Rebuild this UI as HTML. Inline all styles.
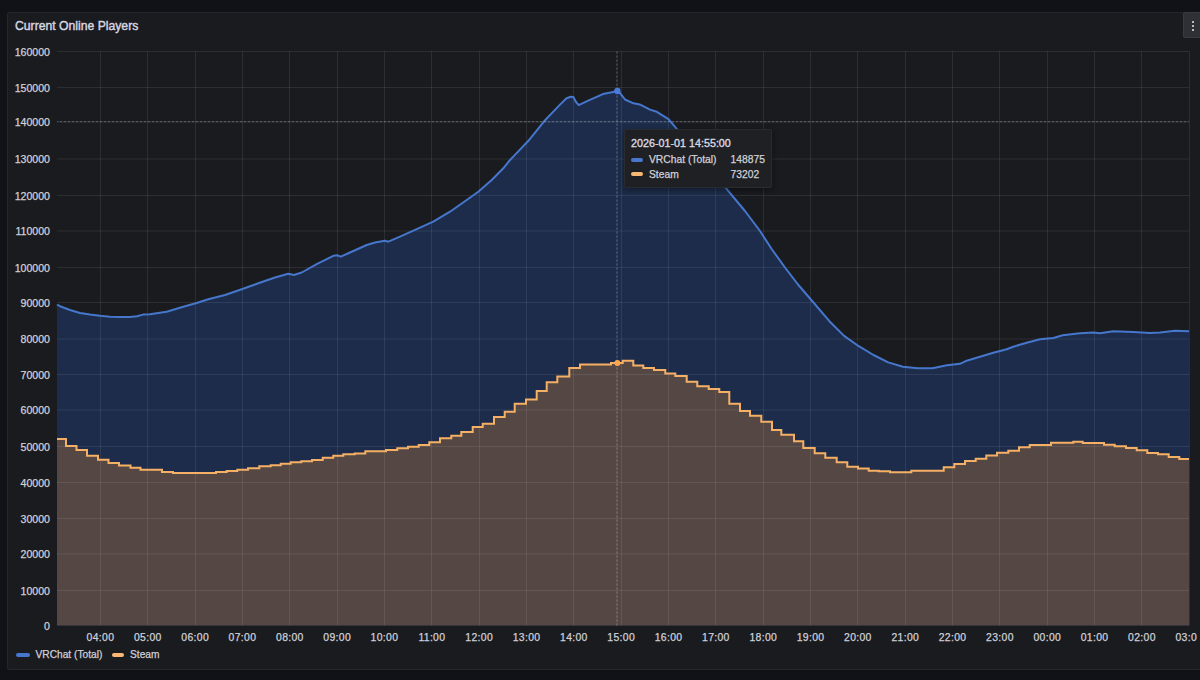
<!DOCTYPE html>
<html><head><meta charset="utf-8">
<style>
html,body{margin:0;padding:0;}
body{width:1200px;height:680px;overflow:hidden;background:#111217;position:relative;font-family:"Liberation Sans",sans-serif;}
.panel{position:absolute;left:7px;top:11.5px;width:1210px;height:658px;background:#1a1b1f;border:1px solid #25262b;border-radius:2px;box-sizing:border-box;}
.title{position:absolute;left:15px;top:18.6px;font-size:12.2px;font-weight:normal;color:#d6d7e0;-webkit-text-stroke:0.4px #d6d7e0;white-space:nowrap;}
.menu{position:absolute;left:1183px;top:12px;width:30px;height:26px;background:#2f3035;border:1px solid #3a3b40;border-radius:2px;box-sizing:border-box;}
.dot{position:absolute;left:8.3px;width:1.8px;height:1.8px;background:#b8b9c0;}
svg{position:absolute;left:0;top:0;}
.yl{position:absolute;right:1150px;margin-top:0px;font-size:10.6px;color:#cfd0d9;-webkit-text-stroke:0.25px #cfd0d9;line-height:12px;white-space:nowrap;}
.xl{position:absolute;top:631.8px;width:40px;text-align:center;font-size:10.4px;letter-spacing:0.35px;color:#cfd0d9;-webkit-text-stroke:0.25px #cfd0d9;line-height:12px;white-space:nowrap;}
.tt{position:absolute;left:624px;top:129px;width:148px;height:59px;background:#1f2024;border:1px solid #2a2b30;box-sizing:border-box;border-radius:2px;box-shadow:0 2px 6px rgba(0,0,0,0.4);}
.tt .h{position:absolute;left:6px;top:7px;font-size:10.75px;font-weight:normal;color:#d8d9e0;-webkit-text-stroke:0.35px #d8d9e0;white-space:nowrap;}
.tt .r{position:absolute;left:24px;font-size:10.3px;color:#d0d1d8;-webkit-text-stroke:0.25px #d0d1d8;white-space:nowrap;}
.tt .v{position:absolute;left:105.5px;font-size:10.3px;color:#d0d1d8;-webkit-text-stroke:0.25px #d0d1d8;white-space:nowrap;}
.sw{position:absolute;width:12px;height:4px;border-radius:2px;}
.lg{position:absolute;top:648.5px;font-size:10.2px;color:#cfd0d9;-webkit-text-stroke:0.25px #cfd0d9;white-space:nowrap;line-height:12px;}
</style></head><body>
<div class="panel"></div>
<div class="title">Current Online Players</div>
<div class="menu"><div class="dot" style="top:8px"></div><div class="dot" style="top:12px"></div><div class="dot" style="top:16px"></div></div>
<svg width="1200" height="680" viewBox="0 0 1200 680">
<path d="M57 304.6 L60 306.2 L70 310 L80 313 L90 314.6 L100 315.8 L110 316.7 L120 317 L130 317 L137 316.2 L143 314.6 L150 314.2 L166.7 311.7 L183.3 306.7 L195.8 303.3 L208.3 299.2 L225 295 L241.7 289.2 L258.3 283.3 L275 277.5 L288.3 273.7 L294 275 L301.7 272.5 L316.7 264.2 L333.3 255.8 L337.5 255.3 L340.8 256.7 L350 252.5 L366.7 245 L375 242.5 L385 240.8 L388.3 241.7 L400 236.7 L416.7 229.2 L433.3 221.7 L450 211.7 L466.7 200 L478.3 191.7 L491.7 180 L503.3 168.3 L510 160 L514.7 155.1 L529.4 139.7 L544.1 121.3 L558.8 105.9 L566.2 98.5 L570.6 96.8 L573.5 97.1 L575.7 101.5 L578.7 105.1 L588.2 100.7 L602.9 94.1 L613.2 92.1 L617.4 90 L622 95.6 L625 99.5 L632.4 102.9 L639.7 104.4 L650 109.6 L656.8 111.8 L668.5 119.1 L675.9 127.9 L700 157 L725.9 188.2 L745 211 L760 231 L772 249.5 L785 267.5 L798 284.5 L810 298.5 L829.4 321.2 L844.1 335.9 L858.8 346.2 L873.5 355 L888.2 362.4 L902.9 366.8 L917.6 368.2 L932.4 368.2 L947 365.3 L960 363.8 L966.7 360.7 L980 356.7 L993.3 352.7 L1006.7 349.3 L1013.3 346.7 L1026.7 342.7 L1040 339.3 L1053.3 338 L1062.7 335.3 L1080 333.3 L1093.3 332.4 L1100 333.3 L1113.3 331.3 L1133.3 332 L1150 333 L1160 332.5 L1175 330.8 L1189 331.3 L1189 625.6 L57 625.6 Z" fill="#1c2c4a"/>
<path d="M57 439 L66 439 L66 446 L76.5 446 L76.5 450 L87 450 L87 455.8 L98 455.8 L98 459.8 L108.5 459.8 L108.5 463 L119 463 L119 465.5 L130.5 465.5 L130.5 467.8 L140.5 467.8 L140.5 469.8 L162 469.8 L162 472 L173 472 L173 473 L216 473 L216 472 L226.7 472 L226.7 471 L237.3 471 L237.3 469.7 L248 469.7 L248 468.3 L259.3 468.3 L259.3 466.3 L270.7 466.3 L270.7 465.3 L280.7 465.3 L280.7 463.7 L290.7 463.7 L290.7 462.3 L301.3 462.3 L301.3 461.3 L312 461.3 L312 460 L322.7 460 L322.7 457.7 L333.3 457.7 L333.3 455.7 L343.3 455.7 L343.3 454.3 L354.7 454.3 L354.7 453.4 L365.3 453.4 L365.3 451.3 L386 451.3 L386 450 L397.3 450 L397.3 448.3 L408 448.3 L408 446.7 L418.7 446.7 L418.7 445 L429.3 445 L429.3 442.3 L440 442.3 L440 438.3 L451.3 438.3 L451.3 435.7 L461.3 435.7 L461.3 432 L472.7 432 L472.7 427 L482.7 427 L482.7 423.7 L494 423.7 L494 417 L504.7 417 L504.7 411.7 L514.7 411.7 L514.7 403.7 L526 403.7 L526 399.4 L536.7 399.4 L536.7 391 L546.7 391 L546.7 382.3 L557.3 382.3 L557.3 376.6 L569.3 376.6 L569.3 367.9 L580 367.9 L580 364.5 L611 364.5 L611 363 L622.7 363 L622.7 360.7 L633.3 360.7 L633.3 365.5 L643.3 365.5 L643.3 367.9 L654 367.9 L654 370 L665.3 370 L665.3 373.4 L675.3 373.4 L675.3 375.9 L686.7 375.9 L686.7 381.7 L697.3 381.7 L697.3 386.3 L708.7 386.3 L708.7 389 L719.3 389 L719.3 392 L729.3 392 L729.3 403.7 L740 403.7 L740 411 L750 411 L750 415.7 L761.3 415.7 L761.3 421.7 L772 421.7 L772 430 L781.3 430 L781.3 434.7 L794 434.7 L794 441.3 L803.3 441.3 L803.3 448 L814.7 448 L814.7 453.3 L825.3 453.3 L825.3 457.7 L836.7 457.7 L836.7 462.3 L847.3 462.3 L847.3 466.7 L858 466.7 L858 468.4 L868.7 468.4 L868.7 470.7 L878.7 470.7 L878.7 471.3 L890 471.3 L890 472.3 L911.3 472.3 L911.3 470.7 L943.7 470.7 L943.7 467.3 L954.3 467.3 L954.3 464 L965 464 L965 461 L975.7 461 L975.7 458.7 L986.3 458.7 L986.3 455.6 L997 455.6 L997 452.7 L1008.3 452.7 L1008.3 450.7 L1019 450.7 L1019 447.3 L1029.7 447.3 L1029.7 445 L1051 445 L1051 442.7 L1073.3 442.7 L1073.3 441.7 L1082.7 441.7 L1082.7 443 L1104 443 L1104 444.7 L1114.7 444.7 L1114.7 446.3 L1126 446.3 L1126 448 L1136.7 448 L1136.7 450.3 L1147.3 450.3 L1147.3 453 L1158 453 L1158 454.3 L1168.7 454.3 L1168.7 457 L1179.3 457 L1179.3 459 L1189 459 L1189 625.6 L57 625.6 Z" fill="#554844"/>
<path d="M57 590.5 H1189 M57 554 H1189 M57 518.5 H1189 M57 482.5 H1189 M57 446.5 H1189 M57 410 H1189 M57 374.5 H1189 M57 339 H1189 M57 302.5 H1189 M57 267.5 H1189 M57 231 H1189 M57 195.5 H1189 M57 159 H1189 M57 122 H1189 M57 87.5 H1189 M57 51.5 H1189 M100.5 51.2 V625.6 M147.5 51.2 V625.6 M195.5 51.2 V625.6 M242.5 51.2 V625.6 M289.5 51.2 V625.6 M337.5 51.2 V625.6 M384.5 51.2 V625.6 M431.5 51.2 V625.6 M479.5 51.2 V625.6 M526.5 51.2 V625.6 M573.5 51.2 V625.6 M621.5 51.2 V625.6 M668.5 51.2 V625.6 M715.5 51.2 V625.6 M763.5 51.2 V625.6 M810.5 51.2 V625.6 M857.5 51.2 V625.6 M905.5 51.2 V625.6 M952.5 51.2 V625.6 M999.5 51.2 V625.6 M1047.5 51.2 V625.6 M1094.5 51.2 V625.6 M1141.5 51.2 V625.6 M1189.5 51.2 V625.6" stroke="rgba(230,240,255,0.09)" stroke-width="1" fill="none"/>
<path d="M57 304.6 L60 306.2 L70 310 L80 313 L90 314.6 L100 315.8 L110 316.7 L120 317 L130 317 L137 316.2 L143 314.6 L150 314.2 L166.7 311.7 L183.3 306.7 L195.8 303.3 L208.3 299.2 L225 295 L241.7 289.2 L258.3 283.3 L275 277.5 L288.3 273.7 L294 275 L301.7 272.5 L316.7 264.2 L333.3 255.8 L337.5 255.3 L340.8 256.7 L350 252.5 L366.7 245 L375 242.5 L385 240.8 L388.3 241.7 L400 236.7 L416.7 229.2 L433.3 221.7 L450 211.7 L466.7 200 L478.3 191.7 L491.7 180 L503.3 168.3 L510 160 L514.7 155.1 L529.4 139.7 L544.1 121.3 L558.8 105.9 L566.2 98.5 L570.6 96.8 L573.5 97.1 L575.7 101.5 L578.7 105.1 L588.2 100.7 L602.9 94.1 L613.2 92.1 L617.4 90 L622 95.6 L625 99.5 L632.4 102.9 L639.7 104.4 L650 109.6 L656.8 111.8 L668.5 119.1 L675.9 127.9 L700 157 L725.9 188.2 L745 211 L760 231 L772 249.5 L785 267.5 L798 284.5 L810 298.5 L829.4 321.2 L844.1 335.9 L858.8 346.2 L873.5 355 L888.2 362.4 L902.9 366.8 L917.6 368.2 L932.4 368.2 L947 365.3 L960 363.8 L966.7 360.7 L980 356.7 L993.3 352.7 L1006.7 349.3 L1013.3 346.7 L1026.7 342.7 L1040 339.3 L1053.3 338 L1062.7 335.3 L1080 333.3 L1093.3 332.4 L1100 333.3 L1113.3 331.3 L1133.3 332 L1150 333 L1160 332.5 L1175 330.8 L1189 331.3" stroke="#4677cc" stroke-width="2" fill="none" stroke-linejoin="round"/>
<path d="M57 439 L66 439 L66 446 L76.5 446 L76.5 450 L87 450 L87 455.8 L98 455.8 L98 459.8 L108.5 459.8 L108.5 463 L119 463 L119 465.5 L130.5 465.5 L130.5 467.8 L140.5 467.8 L140.5 469.8 L162 469.8 L162 472 L173 472 L173 473 L216 473 L216 472 L226.7 472 L226.7 471 L237.3 471 L237.3 469.7 L248 469.7 L248 468.3 L259.3 468.3 L259.3 466.3 L270.7 466.3 L270.7 465.3 L280.7 465.3 L280.7 463.7 L290.7 463.7 L290.7 462.3 L301.3 462.3 L301.3 461.3 L312 461.3 L312 460 L322.7 460 L322.7 457.7 L333.3 457.7 L333.3 455.7 L343.3 455.7 L343.3 454.3 L354.7 454.3 L354.7 453.4 L365.3 453.4 L365.3 451.3 L386 451.3 L386 450 L397.3 450 L397.3 448.3 L408 448.3 L408 446.7 L418.7 446.7 L418.7 445 L429.3 445 L429.3 442.3 L440 442.3 L440 438.3 L451.3 438.3 L451.3 435.7 L461.3 435.7 L461.3 432 L472.7 432 L472.7 427 L482.7 427 L482.7 423.7 L494 423.7 L494 417 L504.7 417 L504.7 411.7 L514.7 411.7 L514.7 403.7 L526 403.7 L526 399.4 L536.7 399.4 L536.7 391 L546.7 391 L546.7 382.3 L557.3 382.3 L557.3 376.6 L569.3 376.6 L569.3 367.9 L580 367.9 L580 364.5 L611 364.5 L611 363 L622.7 363 L622.7 360.7 L633.3 360.7 L633.3 365.5 L643.3 365.5 L643.3 367.9 L654 367.9 L654 370 L665.3 370 L665.3 373.4 L675.3 373.4 L675.3 375.9 L686.7 375.9 L686.7 381.7 L697.3 381.7 L697.3 386.3 L708.7 386.3 L708.7 389 L719.3 389 L719.3 392 L729.3 392 L729.3 403.7 L740 403.7 L740 411 L750 411 L750 415.7 L761.3 415.7 L761.3 421.7 L772 421.7 L772 430 L781.3 430 L781.3 434.7 L794 434.7 L794 441.3 L803.3 441.3 L803.3 448 L814.7 448 L814.7 453.3 L825.3 453.3 L825.3 457.7 L836.7 457.7 L836.7 462.3 L847.3 462.3 L847.3 466.7 L858 466.7 L858 468.4 L868.7 468.4 L868.7 470.7 L878.7 470.7 L878.7 471.3 L890 471.3 L890 472.3 L911.3 472.3 L911.3 470.7 L943.7 470.7 L943.7 467.3 L954.3 467.3 L954.3 464 L965 464 L965 461 L975.7 461 L975.7 458.7 L986.3 458.7 L986.3 455.6 L997 455.6 L997 452.7 L1008.3 452.7 L1008.3 450.7 L1019 450.7 L1019 447.3 L1029.7 447.3 L1029.7 445 L1051 445 L1051 442.7 L1073.3 442.7 L1073.3 441.7 L1082.7 441.7 L1082.7 443 L1104 443 L1104 444.7 L1114.7 444.7 L1114.7 446.3 L1126 446.3 L1126 448 L1136.7 448 L1136.7 450.3 L1147.3 450.3 L1147.3 453 L1158 453 L1158 454.3 L1168.7 454.3 L1168.7 457 L1179.3 457 L1179.3 459 L1189 459" stroke="#f6b065" stroke-width="2" fill="none"/>
<path d="M617 51.35 V625.6" stroke="rgba(200,205,225,0.38)" stroke-width="1" stroke-dasharray="2.5 1.5"/>
<path d="M57 121.7 H1189" stroke="rgba(200,205,225,0.38)" stroke-width="1" stroke-dasharray="2.5 1.5" stroke-dashoffset="1.25"/>
<circle cx="617.4" cy="91" r="3.2" fill="#4a7ad8"/>
<circle cx="617.4" cy="363" r="3" fill="#ffa64d"/>
</svg>
<div class="yl" style="top:619.6px">0</div><div class="yl" style="top:584.5px">10000</div><div class="yl" style="top:548px">20000</div><div class="yl" style="top:512.5px">30000</div><div class="yl" style="top:476.5px">40000</div><div class="yl" style="top:440.5px">50000</div><div class="yl" style="top:404px">60000</div><div class="yl" style="top:368.5px">70000</div><div class="yl" style="top:333px">80000</div><div class="yl" style="top:296.5px">90000</div><div class="yl" style="top:261.5px">100000</div><div class="yl" style="top:225px">110000</div><div class="yl" style="top:189.5px">120000</div><div class="yl" style="top:153px">130000</div><div class="yl" style="top:116px">140000</div><div class="yl" style="top:81.5px">150000</div><div class="yl" style="top:45.5px">160000</div>
<div style="position:absolute;left:0;top:0;width:1197px;height:680px;overflow:hidden"><div class="xl" style="left:80.5px">04:00</div><div class="xl" style="left:127.8px">05:00</div><div class="xl" style="left:175.2px">06:00</div><div class="xl" style="left:222.5px">07:00</div><div class="xl" style="left:269.9px">08:00</div><div class="xl" style="left:317.2px">09:00</div><div class="xl" style="left:364.5px">10:00</div><div class="xl" style="left:411.9px">11:00</div><div class="xl" style="left:459.2px">12:00</div><div class="xl" style="left:506.6px">13:00</div><div class="xl" style="left:553.9px">14:00</div><div class="xl" style="left:601.2px">15:00</div><div class="xl" style="left:648.6px">16:00</div><div class="xl" style="left:695.9px">17:00</div><div class="xl" style="left:743.3px">18:00</div><div class="xl" style="left:790.6px">19:00</div><div class="xl" style="left:837.9px">20:00</div><div class="xl" style="left:885.3px">21:00</div><div class="xl" style="left:932.6px">22:00</div><div class="xl" style="left:980px">23:00</div><div class="xl" style="left:1027.3px">00:00</div><div class="xl" style="left:1074.6px">01:00</div><div class="xl" style="left:1122px">02:00</div><div class="xl" style="left:1169.3px">03:00</div></div>
<div class="tt">
<div class="h">2026-01-01 14:55:00</div>
<div class="sw" style="left:6px;top:28px;background:#4677cc"></div>
<div class="r" style="top:23.5px">VRChat (Total)</div>
<div class="v" style="top:23.5px">148875</div>
<div class="sw" style="left:6px;top:42px;background:#f8b873"></div>
<div class="r" style="top:38.5px">Steam</div>
<div class="v" style="top:38.5px">73202</div>
</div>
<div class="sw" style="left:16px;top:653px;width:14px;background:#4677cc"></div>
<div class="lg" style="left:35.5px">VRChat (Total)</div>
<div class="sw" style="left:112px;top:653px;background:#f8b873"></div>
<div class="lg" style="left:130px">Steam</div>
</body></html>
